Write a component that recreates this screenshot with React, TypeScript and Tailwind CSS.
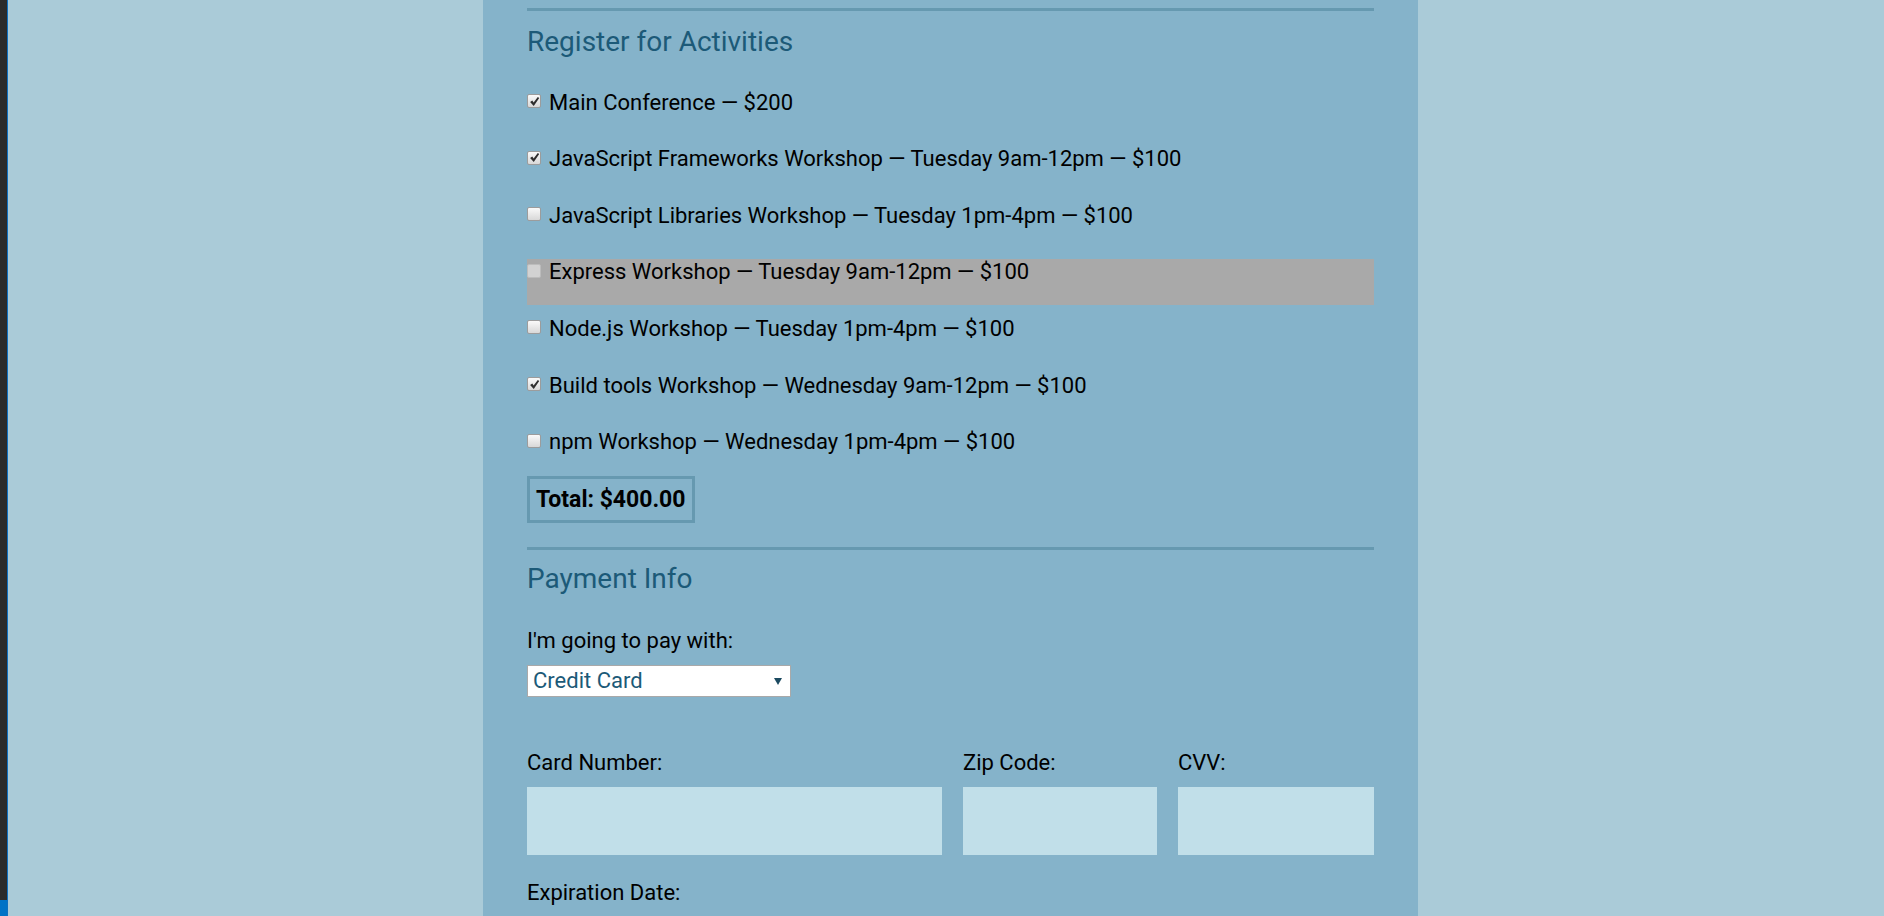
import React from 'react';

type Activity = { text: string; checked: boolean; disabled?: boolean };

const activities: Activity[] = [
  { text: 'Main Conference — $200', checked: true },
  { text: 'JavaScript Frameworks Workshop — Tuesday 9am-12pm — $100', checked: true },
  { text: 'JavaScript Libraries Workshop — Tuesday 1pm-4pm — $100', checked: false },
  { text: 'Express Workshop — Tuesday 9am-12pm — $100', checked: false, disabled: true },
  { text: 'Node.js Workshop — Tuesday 1pm-4pm — $100', checked: false },
  { text: 'Build tools Workshop — Wednesday 9am-12pm — $100', checked: true },
  { text: 'npm Workshop — Wednesday 1pm-4pm — $100', checked: false },
];

const CheckBox: React.FC<{ checked: boolean; disabled?: boolean }> = ({ checked, disabled }) => (
  <span
    className={`mt-[4.5px] mr-[8px] flex h-[14px] w-[14px] shrink-0 items-center justify-center rounded-[2px] border ${
      disabled
        ? 'border-[#bcbcbc] bg-[#d2d2d2]'
        : 'border-[#9c9c9c] bg-gradient-to-b from-[#fafafa] to-[#d8d8d8]'
    }`}
  >
    {checked && (
      <svg className="h-[11px] w-[11px]" viewBox="0 0 10 10">
        <path d="M1 5.4 L3 4.2 L4.2 6 L8 0.8 L9.3 1.9 L4.3 9 Z" fill="#2e2e2e" />
      </svg>
    )}
  </span>
);

const Field: React.FC<{ label: string; width: string }> = ({ label, width }) => (
  <div className={`flex flex-col ${width}`}>
    <span className="leading-[25.8px]">{label}</span>
    <div className="mt-[11.6px] h-[68px] bg-[#c1dfe9]" />
  </div>
);

const App: React.FC = () => {
  return (
    <div className="flex h-[916px] w-[1884px] overflow-hidden bg-[#aacbd8] font-['Roboto',sans-serif] text-[22px] text-black">
      <div className="flex w-[7px] flex-col">
        <div className="flex-1 bg-[#2b2b2b]" />
        <div className="h-[16px] bg-[#0072c6]" />
      </div>
      <div className="w-px bg-[#0e6fc0]" />

      <div className="pl-[475px]">
        <div className="flex h-full w-[935px] flex-col bg-[#85b3ca] px-[44px] pt-[8px]">
          <div className="h-[3px] bg-[#6699b0]" />

          <h2 className="mt-[14.7px] mb-[20.5px] text-[28px] leading-[32.8px] text-[#1c5a78]">
            Register for Activities
          </h2>

          {activities.map((a) => (
            <label
              key={a.text}
              className={`mt-[10.6px] flex h-[46px] shrink-0 items-start leading-[25.8px] ${a.disabled ? 'bg-[#a9a9a9]' : ''}`}
            >
              <CheckBox checked={a.checked} disabled={a.disabled} />
              <span>{a.text}</span>
            </label>
          ))}

          <div className="mt-[0.8px] w-fit self-start border-[3px] border-[#6699b0] px-[6px] py-[7px] text-[23px] font-bold leading-[27px]">
            Total: $400.00
          </div>

          <div className="mt-[24px] h-[3px] shrink-0 bg-[#6699b0]" />

          <h2 className="mt-[13.3px] text-[28px] leading-[32.8px] text-[#1c5a78]">Payment Info</h2>

          <p className="mt-[32px] leading-[25.8px]">I'm going to pay with:</p>

          <div className="mt-[11.5px] flex h-[32px] w-[264px] shrink-0 items-center justify-between border border-[#a9a9a9] bg-white pr-[8px] pl-[5px] leading-[25.8px] text-[#1c5a78]">
            <span>Credit Card</span>
            <svg className="h-[7px] w-[8px]" viewBox="0 0 8 7">
              <path d="M0 0 H8 L4 7 Z" fill="#1c4a60" />
            </svg>
          </div>

          <div className="mt-[52.3px] flex shrink-0 gap-[21px]">
            <Field label="Card Number:" width="w-[415px]" />
            <Field label="Zip Code:" width="w-[194px]" />
            <Field label="CVV:" width="w-[196px]" />
          </div>

          <p className="mt-[24.6px] shrink-0 leading-[25.8px]">Expiration Date:</p>
        </div>
      </div>
    </div>
  );
};

export default App;
